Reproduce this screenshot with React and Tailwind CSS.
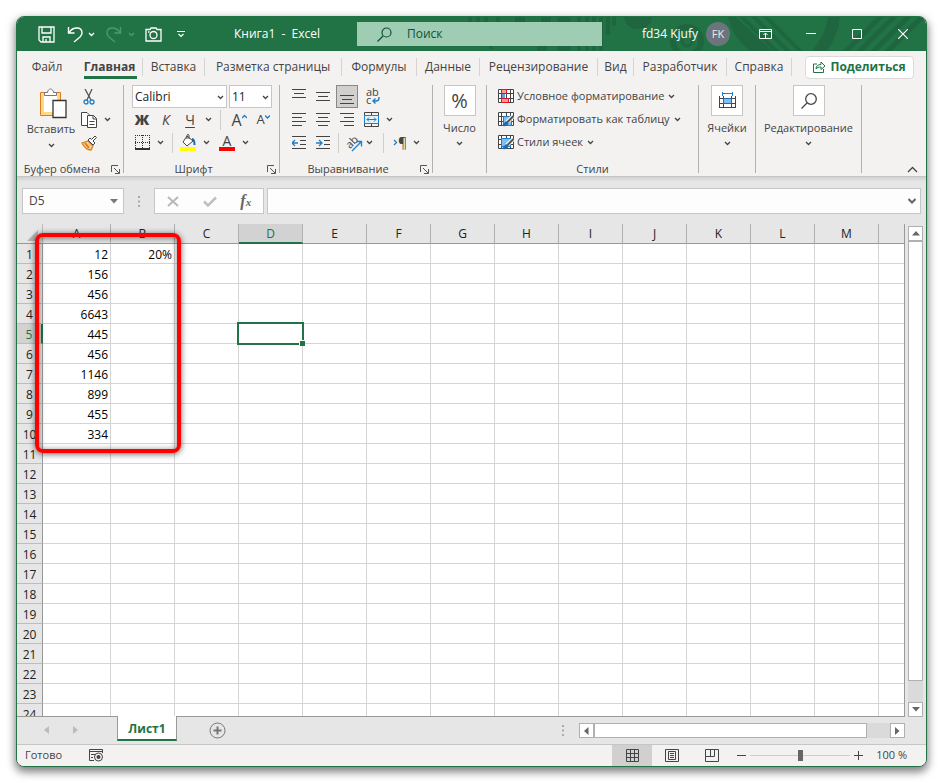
import { useState } from "react";
import clsx from "clsx";

const TABS = [
  { label: "Файл", width: "w-[60px]", noLine: true },
  { label: "Главная", width: "w-[66px]", active: true },
  { label: "Вставка", width: "w-[62px]" },
  { label: "Разметка страницы", width: "w-[137px]" },
  { label: "Формулы", width: "w-[75px]" },
  { label: "Данные", width: "w-[63px]" },
  { label: "Рецензирование", width: "w-[118px]" },
  { label: "Вид", width: "w-[36px]" },
  { label: "Разработчик", width: "w-[93px]" },
  { label: "Справка", width: "w-[65px]" },
];

const COLUMNS = ["A", "B", "C", "D", "E", "F", "G", "H", "I", "J", "K", "L", "M", ""];
const ROWS = Array.from({ length: 24 }, (_, i) => i + 1);

const CELLS = {
  A1: "12",
  A2: "156",
  A3: "456",
  A4: "6643",
  A5: "445",
  A6: "456",
  A7: "1146",
  A8: "899",
  A9: "455",
  A10: "334",
  B1: "20%",
};

export default function App() {
  return (
    <div className="h-screen p-4 bg-white font-['Open_Sans','Noto_Sans',sans-serif] text-xs text-[#444]">
      <div className="h-full flex flex-col overflow-hidden rounded-lg border border-[#217346] bg-[#e6e6e6] shadow-[0_4px_9px_1px_rgba(0,0,0,0.5)]">
        <TitleBar />
        <TabStrip />
        <Ribbon />
        <FormulaBar />
        <Sheet />
        <SheetTabs />
        <StatusBar />
      </div>
    </div>
  );
}

function TitleBar() {
  return (
    <header className="relative h-[34px] shrink-0 flex items-center bg-[#217346] text-white">
      <TitleArt />
      <div className="relative flex items-center pl-4 w-[217px]">
        <button aria-label="Сохранить" className="w-[26px] flex justify-center">
          <svg width="17" height="17" fill="none" stroke="currentColor" strokeWidth="1.3">
            <path d="M1 1h15v15H3l-2-2zM4 1v6h9V1M5 16v-5h7v5M8 16v-3" />
          </svg>
        </button>
        <button aria-label="Отменить" className="w-[28px] ml-[2px] flex justify-center">
          <svg width="16" height="17" fill="none" stroke="currentColor" strokeWidth="1.4">
            <path d="M1.500 1v6h6M2 7C4 3 7 2 10 2c3 0 5 2 5 5 0 2-1 3-2 4l-6 5" />
          </svg>
        </button>
        <button aria-label="История отмены" className="w-3 -ml-[4px] flex justify-center">
          <Chevron />
        </button>
        <button aria-label="Вернуть" disabled className="w-[28px] ml-[3px] flex justify-center text-[#4b9a6e]">
          <svg width="16" height="17" fill="none" stroke="currentColor" strokeWidth="1.4">
            <path d="M14.500 1v6h-6M14 7C12 3 9 2 6 2 3 2 1 4 1 7c0 2 1 3 2 4l6 5" />
          </svg>
        </button>
        <button aria-label="История возврата" disabled className="w-3 -ml-[3px] flex justify-center text-[#4b9a6e]">
          <Chevron />
        </button>
        <button aria-label="Снимок" className="w-[26px] ml-[3px] flex justify-center">
          <svg width="17" height="15" fill="none" stroke="currentColor" strokeWidth="1.3">
            <path d="M1 2.500h4l1-1.500h5l1 1.500h4V14H1z" />
            <circle cx="8.500" cy="8" r="3.500" />
            <path d="M3 5h1.500" />
          </svg>
        </button>
        <button aria-label="Настройка панели" className="w-5 ml-[5px] flex justify-center">
          <svg width="8" height="8" fill="none" stroke="currentColor" strokeWidth="1.2">
            <path d="M0 1.500h8M1.500 4L4 6.500 6.500 4" />
          </svg>
        </button>
      </div>
      <div className="relative w-[123px] whitespace-pre">Книга1  -  Excel</div>
      <label className="relative w-[245px] h-6 flex items-center bg-[#9fcdb3] text-[#0f5132]">
        <svg width="15" height="15" className="ml-5" fill="none" stroke="currentColor" strokeWidth="1.2">
          <circle cx="9.500" cy="5.500" r="4.500" />
          <path d="M6 9L.5 14.500" />
        </svg>
        <input
          aria-label="Поиск"
          placeholder="Поиск"
          className="ml-[15px] w-[180px] bg-transparent outline-none placeholder:text-[#0f5132]"
        />
      </label>
      <div className="relative ml-auto flex items-center">
        <span className="mr-2">fd34 Kjufy</span>
        <span className="w-6 h-6 mr-3 rounded-full bg-[#6c757d] flex items-center justify-center text-[11px] text-[#f0e9e0]">
          FK
        </span>
        <button aria-label="Параметры ленты" className="w-[46px] h-8 flex items-center justify-center">
          <svg width="13" height="10" fill="none" stroke="currentColor">
            <path d="M.5.5h12v9H.5zM.5 2.500h12M6.500 9V4M4.500 6l2-2 2 2" />
          </svg>
        </button>
        <button aria-label="Свернуть" className="w-[46px] h-8 flex items-center justify-center">
          <svg width="10" height="10" stroke="currentColor">
            <path d="M0 4.500h10" />
          </svg>
        </button>
        <button aria-label="Развернуть" className="w-[46px] h-8 flex items-center justify-center">
          <svg width="10" height="10" fill="none" stroke="currentColor">
            <path d="M.5.5h9v9h-9z" />
          </svg>
        </button>
        <button aria-label="Закрыть" className="w-[46px] h-8 flex items-center justify-center">
          <svg width="10" height="10" stroke="currentColor" strokeWidth="1.2">
            <path d="M0 0l10 10M10 0L0 10" />
          </svg>
        </button>
      </div>
    </header>
  );
}

function TitleArt() {
  return (
    <svg width="460" height="34" className="absolute right-0 top-0" fill="none" stroke="#1f6540" aria-hidden="true">
      <path strokeWidth="4" d="M4 0v5M12 0v5M20 0v5M32 0v5M25 28v4M113 0v34M121 0v34M128 0v34M135 0v34M142 0v18M148 0v9" />
      <path strokeWidth="10" d="M54 0v5M80 0v5M76 29v5" />
      <path strokeWidth="13" d="M98 0v34" />
      <path fill="#1f6540" stroke="none" d="M158 0h28a14 12 0 0 1-28 0z" />
      <circle cx="221" cy="24" r="14" strokeWidth="6" />
      <circle cx="221" cy="24" r="5" strokeWidth="3" />
      <path fill="#1f6540" stroke="none" d="M262 0h8l36 34h-22c-10-8-18-18-22-34z" />
      <path strokeWidth="4" d="M274-2l38 38M286-2l38 38M298-2l38 38" />
      <path strokeWidth="12" d="M368-4c0 16-6 28-16 40" />
      <path strokeWidth="5" d="M418-4l-40 40M432-4l-40 40M446-4l-40 40M460-4l-40 40" />
    </svg>
  );
}

function TabStrip() {
  return (
    <nav className="h-8 shrink-0 flex items-center bg-[#f3f2f1]">
      {TABS.map((tab) => (
        <div key={tab.label} className={clsx("h-8 flex items-center shrink-0", tab.width)}>
          <button
            className={clsx(
              "relative flex-1 h-8 flex items-center justify-center whitespace-nowrap",
              tab.active && "font-bold"
            )}
          >
            {tab.label}
            {tab.active && <span className="absolute left-[7px] right-[5px] bottom-1 h-[3px] bg-[#217346]" />}
          </button>
          {!tab.noLine && <span className="w-px h-[18px] bg-[#d6d4d2]" />}
        </div>
      ))}
      <button className="ml-auto mr-3 h-[23px] w-[109px] shrink-0 flex items-center justify-center gap-1 whitespace-nowrap rounded-sm border border-[#dddbd9] bg-white font-bold text-[#217346]">
        <svg width="13" height="12" fill="none" stroke="currentColor">
          <path d="M4 3H.5v8.500h10V8M3 8c0-3 2-4.500 5-4.500V1l4 4-4 3.500V6C6 6 4 6.500 3 8z" />
        </svg>
        Поделиться
      </button>
    </nav>
  );
}

function Ribbon() {
  return (
    <section className="h-[94px] shrink-0 flex border-b border-[#c8c6c4] bg-[#f3f2f1] pt-[2px] text-[11px]">
      <Group width="w-[107px]" label="Буфер обмена" launcher>
        <div className="flex">
          <button className="w-[60px] pl-2 pt-[3px] flex flex-col items-center">
            <svg width="28" height="31" className="shrink-0 ml-1" fill="none">
              <path d="M1.500 4.500h20v23h-20z" fill="#fff" stroke="#e07b1a" />
              <path d="M3.500 6.500h16v19h-16z" stroke="#ffd98a" strokeWidth="3" />
              <path d="M5.500 7.500v-3h3c0-2 1.500-3.500 3-3.500s3 1.500 3 3.500h3v3z" fill="#fff" stroke="#777" />
              <path d="M14 12.500h13v17H14z" fill="#fff" stroke="#333" strokeWidth="1.3" />
            </svg>
            <span className="mt-[2px] leading-4">Вставить</span>
            <span className="mt-[6px]">
              <Chevron />
            </span>
          </button>
          <div className="flex flex-col">
            <Row>
              <IconButton label="Вырезать">
                <svg width="12" height="16" fill="none">
                  <path d="M2 0l6 11M9 0L4 11" stroke="#555" strokeWidth="1.3" />
                  <circle cx="3" cy="13" r="2" stroke="#1e7ec8" strokeWidth="1.3" />
                  <circle cx="9" cy="13" r="2" stroke="#1e7ec8" strokeWidth="1.3" />
                </svg>
              </IconButton>
            </Row>
            <Row>
              <IconButton label="Копировать">
                <svg width="16" height="16" fill="#fff" stroke="#444">
                  <path d="M.5.5H6l2 2v11H.5z" />
                  <path d="M6.500 3.500h6l3 3v9h-9z M12 3.500v3.500h3.500M8.500 9.500h5M8.500 12.500h5" />
                </svg>
              </IconButton>
              <Drop label="Копировать: параметры" />
            </Row>
            <Row>
              <IconButton label="Формат по образцу">
                <svg width="17" height="16" fill="none">
                  <path d="M1 8l6-2 5 5-2 4c-4 0-7-3-9-7z" fill="#fbd08e" stroke="#e07b1a" strokeWidth="1.3" />
                  <path d="M4 8l4 5" stroke="#e07b1a" strokeWidth="2" />
                  <path d="M7 5l5 5 2-2-2-2 3.500-3.500-1.500-1.500L10.500 4.500 9 3z" fill="#fff" stroke="#444" />
                </svg>
              </IconButton>
            </Row>
          </div>
        </div>
      </Group>

      <Group width="w-[156px]" label="Шрифт" launcher>
        <Row>
          <SelectBox label="Шрифт" value="Calibri" width="w-[95px] ml-2" />
          <SelectBox label="Размер шрифта" value="11" width="w-[43px] ml-[2px]" />
        </Row>
        <Row>
          <IconButton label="Полужирный" className="ml-[6px] text-sm font-extrabold">Ж</IconButton>
          <IconButton label="Курсив" className="text-sm italic">К</IconButton>
          <IconButton label="Подчеркнутый" className="text-sm underline underline-offset-2">Ч</IconButton>
          <Drop label="Вид подчеркивания" />
          <Divider className="mx-[6px]" />
          <IconButton label="Увеличить размер" className="text-base">
            A
            <svg width="5" height="12" fill="none" stroke="#1e7ec8" strokeWidth="1.3">
              <path d="M0 4l2.500-2.500L5 4" />
            </svg>
          </IconButton>
          <IconButton label="Уменьшить размер" className="text-[13px]">
            A
            <svg width="5" height="12" fill="none" stroke="#1e7ec8" strokeWidth="1.3">
              <path d="M0 1.500L2.500 4 5 1.500" />
            </svg>
          </IconButton>
        </Row>
        <Row>
          <IconButton label="Границы" className="ml-[6px]">
            <svg width="15" height="15" fill="none" stroke="#333" shapeRendering="crispEdges">
              <path d="M0 .5h15M.5 0v15M14.500 0v15M7.500 0v15M0 7.500h15" strokeDasharray="1 1" />
              <path d="M0 14h15" strokeWidth="2" />
            </svg>
          </IconButton>
          <Drop label="Вид границ" />
          <Divider className="ml-[6px] mr-[3px]" />
          <IconButton label="Цвет заливки">
            <svg width="16" height="17" fill="none">
              <path d="M7 2l6 5-6 5-4-4z" fill="#fff" stroke="#444" />
              <path d="M7 5V1.500C7 0 9 0 9 1.500V5" stroke="#444" />
              <path d="M12 5c2 0 2.500 2 2.500 6" stroke="#1e6cb0" strokeWidth="2" />
              <path d="M0 13h16v4H0z" fill="#ff0" />
            </svg>
          </IconButton>
          <Drop label="Выбор заливки" />
          <IconButton label="Цвет текста" className="ml-[3px]">
            <span className="flex flex-col items-center w-4">
              <span className="h-[13px] text-sm leading-[13px]">A</span>
              <span className="h-1 w-4 bg-[#f00]" />
            </span>
          </IconButton>
          <Drop label="Выбор цвета текста" />
        </Row>
      </Group>

      <Group width="w-[153px]" label="Выравнивание" launcher>
        <Row>
          <IconButton label="По верхнему краю" className="ml-[7px]">
            <Lines lines={[[0, 14, 0], [2, 10, 4], [0, 14, 8]]} />
          </IconButton>
          <IconButton label="По середине">
            <Lines lines={[[0, 14, 3], [2, 10, 7], [0, 14, 11]]} />
          </IconButton>
          <button
            aria-label="По нижнему краю"
            aria-pressed="true"
            className="w-[22px] h-[23px] mx-px flex items-center justify-center border border-[#8a8886] bg-[#d2d0ce]"
          >
            <Lines lines={[[0, 14, 6], [2, 10, 10], [0, 14, 14]]} />
          </button>
          <IconButton label="Перенести текст" className="ml-[2px]">
            <svg width="16" height="22" className="overflow-visible" fill="none">
              <text fontSize="11" fill="#444">
                <tspan x="1" y="10">ab</tspan>
                <tspan x="1" y="18">c</tspan>
              </text>
              <path d="M14 11v1c0 2-1 3-3 3H8M10.500 12.500L8 15l2.500 2.500" stroke="#1e7ec8" strokeWidth="1.4" />
            </svg>
          </IconButton>
        </Row>
        <Row>
          <IconButton label="По левому краю" className="ml-[7px]">
            <Lines lines={[[0, 14, 1], [0, 10, 5], [0, 14, 9], [0, 10, 13]]} />
          </IconButton>
          <IconButton label="По центру">
            <Lines lines={[[0, 14, 1], [2, 10, 5], [0, 14, 9], [2, 10, 13]]} />
          </IconButton>
          <IconButton label="По правому краю">
            <Lines lines={[[0, 14, 1], [4, 10, 5], [0, 14, 9], [4, 10, 13]]} />
          </IconButton>
          <IconButton label="Объединить и поместить в центре">
            <svg width="15" height="15" fill="none" stroke="#444">
              <path d="M.5.5h14v14H.5zM7.500.5v3M7.500 11v3.500" />
              <path d="M.5 3.500h14v8H.5z" fill="#e3f1fb" stroke="#1e7ec8" />
              <path d="M3 7.500h9M5 5.500l-2 2 2 2M10 5.500l2 2-2 2" stroke="#1e7ec8" />
            </svg>
          </IconButton>
          <Drop label="Объединение" />
        </Row>
        <Row>
          <IconButton label="Уменьшить отступ" className="ml-[7px]">
            <Indent d="M0 7h6M3 4L0 7l3 3" />
          </IconButton>
          <IconButton label="Увеличить отступ">
            <Indent d="M0 7h6M3 4l3 3-3 3" />
          </IconButton>
          <Divider className="mx-[3px]" />
          <IconButton label="Ориентация" className="-mr-[3px]">
            <svg width="18" height="18" className="overflow-visible" fill="none">
              <text x="1" y="12" fontSize="11" fill="#444" transform="rotate(-45 7 9)">ab</text>
              <path d="M7 17L16 8M11.500 7.500h5V12.500" stroke="#1e7ec8" strokeWidth="1.3" />
            </svg>
          </IconButton>
          <Drop label="Выбор ориентации" />
          <Divider className="ml-2 mr-1" />
          <IconButton label="Направление текста" className="-mr-[2px] text-sm">
            <svg width="5" height="7" fill="none" stroke="#1e7ec8" strokeWidth="1.3">
              <path d="M1 1l2.500 2.500L1 6" />
            </svg>
            ¶
          </IconButton>
          <Drop label="Выбор направления" />
        </Row>
      </Group>

      <BigGroup width="w-[54px]" label="Число">
        <span className="text-xl leading-5">%</span>
      </BigGroup>

      <Group width="w-[212px]" label="Стили">
        <StyleRow label="Условное форматирование">
          <TableIcon>
            <path d="M3.500.5h5v4h-5zM3.500 9.500h7v4h-7z" fill="#ff9a9a" stroke="#e81123" />
            <path d="M4 5h3v4H4z" fill="#5aa7e0" stroke="none" />
          </TableIcon>
        </StyleRow>
        <StyleRow label="Форматировать как таблицу">
          <TableIcon>
            <path d="M5.500 4.500h8v9h-8z" fill="#83bdec" stroke="#1e7ec8" />
            <Brush />
          </TableIcon>
        </StyleRow>
        <StyleRow label="Стили ячеек">
          <TableIcon>
            <path d="M3.500 3.500h9v8h-9z" fill="#83bdec" stroke="#1e7ec8" />
            <Brush />
          </TableIcon>
        </StyleRow>
      </Group>

      <BigGroup width="w-[57px]" label="Ячейки">
        <svg width="17" height="17" fill="none" stroke="#444" shapeRendering="crispEdges">
          <path d="M.5 3.500v12h16v-12M.5 6.500h16M.5 11.500h16M4.500 4v12M12.500 4v12" />
          <path d="M4.500 6.500h8v5h-8z" fill="#83bdec" stroke="#1e6cb0" />
          <path d="M3.500 1.500h10M3.500 0v4M13.500 0v4" stroke="#1e7ec8" />
        </svg>
      </BigGroup>
      <BigGroup width="w-[106px]" label="Редактирование">
        <svg width="16" height="16" fill="none" stroke="#444" strokeWidth="1.3">
          <circle cx="10" cy="6" r="5.300" />
          <path d="M6 10L.5 15.500" />
        </svg>
      </BigGroup>

      <button aria-label="Свернуть ленту" className="ml-auto mr-2 mb-[3px] self-end">
        <svg width="11" height="7" fill="none" stroke="#444" strokeWidth="1.3">
          <path d="M1 6l4.500-4.500L10 6" />
        </svg>
      </button>
    </section>
  );
}

function Group({ width, label, launcher, children }) {
  return (
    <div className={clsx("shrink-0 h-[88px] flex flex-col border-r border-[#b3b1af]", width)}>
      <div className="h-[75px] shrink-0">{children}</div>
      <div className="flex items-center h-[18px] shrink-0">
        <span className="flex-1 text-center whitespace-nowrap">{label}</span>
        {launcher && (
          <button aria-label={`${label}: параметры`} className="w-4 flex justify-center">
            <svg width="9" height="9" fill="none" stroke="#555">
              <path d="M.5 7V.5H7M3 3l5 5M8.500 4v4.500H4" />
            </svg>
          </button>
        )}
      </div>
    </div>
  );
}

function BigGroup({ width, label, children }) {
  return (
    <div className={clsx("shrink-0 h-[88px] border-r border-[#b3b1af]", width)}>
      <button className="w-full flex flex-col items-center">
        <span className="w-8 h-[31px] flex items-center justify-center border border-[#c8c6c4] bg-white">
          {children}
        </span>
        <span className="mt-1 leading-4 whitespace-nowrap">{label}</span>
        <span className="mt-[5px]">
          <Chevron />
        </span>
      </button>
    </div>
  );
}

function Row({ children }) {
  return <div className="flex items-center h-[23px]">{children}</div>;
}

function IconButton({ label, className, children }) {
  return (
    <button aria-label={label} className={clsx("w-6 h-[23px] shrink-0 flex items-center justify-center", className)}>
      {children}
    </button>
  );
}

function Drop({ label }) {
  return (
    <button aria-label={label} className="w-3 h-[23px] shrink-0 flex items-center justify-center">
      <Chevron />
    </button>
  );
}

function Chevron() {
  return (
    <svg width="7" height="5" fill="none" stroke="currentColor" strokeWidth="1.3">
      <path d="M1 1l2.500 2.500L6 1" />
    </svg>
  );
}

function Divider({ className }) {
  return <span className={clsx("w-px h-5 shrink-0 bg-[#d0cecc]", className)} />;
}

function SelectBox({ label, value, width }) {
  return (
    <span className={clsx("relative h-[23px] border border-[#c8c6c4] bg-white text-xs", width)}>
      <select
        aria-label={label}
        defaultValue={value}
        className="w-full h-full pl-[2px] appearance-none bg-transparent text-[#222] outline-none"
      >
        <option>{value}</option>
      </select>
      <span className="pointer-events-none absolute right-[2px] top-[9px]">
        <Chevron />
      </span>
    </span>
  );
}

// each line is [x, length, y]
function Lines({ lines }) {
  return (
    <svg width="14" height="15" fill="#444" shapeRendering="crispEdges">
      {lines.map(([x, length, y]) => (
        <rect key={y} x={x} y={y} width={length} height="1" />
      ))}
    </svg>
  );
}

function Indent({ d }) {
  return (
    <svg width="15" height="14" fill="none" stroke="#444">
      <path d="M0 .5h14M8 4.500h6M8 8.500h6M0 12.500h14" />
      <path d={d} stroke="#1e7ec8" strokeWidth="1.3" />
    </svg>
  );
}

function StyleRow({ label, children }) {
  return (
    <Row>
      <button className="flex items-center pl-[11px] whitespace-nowrap">
        {children}
        <span className="ml-[3px] mr-1">{label}</span>
        <Chevron />
      </button>
    </Row>
  );
}

function TableIcon({ children }) {
  return (
    <svg width="16" height="15" fill="none" stroke="#444">
      <path d="M.5.5h15v13H.5zM.5 4.500h15M.5 9.500h15M3.500.5v13M8.500.5v13M12.500.5v13" fill="#fff" />
      {children}
    </svg>
  );
}

function Brush() {
  return (
    <>
      <path d="M15.500 4L9 10" stroke="#fff" strokeWidth="4" />
      <path d="M15.500 4L9 10.500" stroke="#555" strokeWidth="2" />
      <path d="M9 9.500c-3 0-3 3-5.500 4 3 1.500 7 .5 7-2.500z" fill="#1e6cb0" stroke="none" />
    </>
  );
}

function FormulaBar() {
  const [address, setAddress] = useState("D5");

  return (
    <div className="shrink-0 flex items-center h-[47px] px-[5px] pt-px bg-linear-to-b from-[#d0d0d0] to-[#e6e6e6] to-10%">
      <div className="flex items-center w-[102px] h-[26px] border border-[#c6c6c6] bg-[#fdfdfd]">
        <input
          aria-label="Имя"
          value={address}
          onChange={(e) => setAddress(e.target.value)}
          className="w-[87px] pl-[6px] bg-transparent outline-none"
        />
        <button aria-label="Список имен">
          <svg width="8" height="5" fill="#777">
            <path d="M0 0h8L4 4.500z" />
          </svg>
        </button>
      </div>
      <svg width="3" height="11" className="ml-[14px]" fill="#aaa">
        <path d="M0 0h2v2H0zM0 4.500h2v2H0zM0 9h2v2H0z" />
      </svg>
      <div className="ml-[13px] w-[110px] h-[26px] flex items-center justify-around border border-[#c6c6c6] bg-[#fdfdfd]">
        <button aria-label="Отмена">
          <svg width="12" height="11" fill="none" stroke="#b8b8b8" strokeWidth="2">
            <path d="M1 1l10 9M11 1L1 10" />
          </svg>
        </button>
        <button aria-label="Ввод">
          <svg width="14" height="11" fill="none" stroke="#bfbfbf" strokeWidth="2.500">
            <path d="M1 5.500L5 9.500 13 1.500" />
          </svg>
        </button>
        <button aria-label="Вставить функцию" className="font-['Liberation_Serif',serif] text-base leading-4 italic font-bold text-[#666]">
          f<span className="text-[11px]">x</span>
        </button>
      </div>
      <div className="ml-[3px] flex-1 h-[26px] flex items-center border border-[#c6c6c6] bg-[#fdfdfd]">
        <input aria-label="Строка формул" className="flex-1 min-w-0 px-2 bg-transparent outline-none" />
        <button aria-label="Развернуть строку формул" className="mr-1">
          <svg width="8" height="6" fill="none" stroke="#666" strokeWidth="2">
            <path d="M.5 1L4 4.500 7.500 1" />
          </svg>
        </button>
      </div>
    </div>
  );
}

function Sheet() {
  return (
    <div className="relative flex-1 min-h-0 flex">
      <div className="flex-1 min-w-0 overflow-hidden border-r border-b border-[#999]">
        <table className="w-full table-fixed border-separate border-spacing-0 text-xs leading-[17px]">
          <colgroup>
            <col className="w-[26px]" />
            <col className="w-[68px]" />
            {COLUMNS.slice(1, 13).map((name) => (
              <col key={name} className="w-16" />
            ))}
            <col />
          </colgroup>
          <thead>
            <tr className="h-5 text-[#222]">
              <th aria-label="Выделить все" className="border-r border-b border-r-[#bbb] border-b-[#999] bg-[#e6e6e6] p-0">
                <svg width="12" height="12" className="ml-auto mr-[3px] mt-1" fill="#b4b4b4">
                  <path d="M11 0v11H0z" />
                </svg>
              </th>
              {COLUMNS.map((name, i) => (
                <th
                  key={i}
                  scope="col"
                  className={clsx(
                    "h-5 p-0 font-normal",
                    i < 13 && "border-r border-r-[#b0b0b0]",
                    name === "D"
                      ? "border-b-2 border-b-[#217346] bg-[#d2d2d2] pt-px text-[#217346]"
                      : "border-b border-b-[#999] bg-[#e6e6e6]"
                  )}
                >
                  {name}
                </th>
              ))}
            </tr>
          </thead>
          <tbody>
            {ROWS.map((row) => (
              <tr key={row} className="h-5">
                <th
                  scope="row"
                  className={clsx(
                    "h-5 p-0 pt-[2px] border-b border-b-[#bdbdbd] font-normal",
                    row === 5
                      ? "border-r-2 border-r-[#217346] bg-[#d2d2d2] text-[#217346]"
                      : "border-r border-r-[#999] bg-[#e6e6e6] text-[#222]"
                  )}
                >
                  {row}
                </th>
                {COLUMNS.map((name, i) => (
                  <td
                    key={i}
                    className={clsx(
                      "relative h-5 p-0 pt-[2px] pr-[2px] border-b border-[#d4d4d4] bg-white text-right text-black",
                      i < 13 && "border-r"
                    )}
                  >
                    {CELLS[name + row]}
                    {name === "D" && row === 5 && <ActiveCell />}
                  </td>
                ))}
              </tr>
            ))}
          </tbody>
        </table>
      </div>

      {/* Highlight frame over the source data */}
      <div className="absolute left-[18px] top-[9px] w-[146px] h-[220px] rounded-lg border-4 border-[#f00] shadow-[0_1px_6px_rgba(0,0,0,0.6),inset_0_1px_6px_rgba(0,0,0,0.5)]" />

      <div className="w-[21px] shrink-0 pt-[2px] px-[3px] flex flex-col">
        <button aria-label="Вверх" className="h-[15px] flex items-center justify-center border border-[#b0b0b0] bg-white">
          <svg width="8" height="5" fill="#666">
            <path d="M4 0l4 4.500H0z" />
          </svg>
        </button>
        <div className="flex-1 pb-[21px] bg-[#dadada]">
          <div className="h-full border border-[#b0b0b0] bg-white" />
        </div>
        <button aria-label="Вниз" className="h-[15px] flex items-center justify-center border border-[#b0b0b0] bg-white">
          <svg width="8" height="5" fill="#666">
            <path d="M0 0h8L4 4.500z" />
          </svg>
        </button>
      </div>
    </div>
  );
}

function ActiveCell() {
  return (
    <span className="absolute -left-[2px] -top-[2px] -right-[2px] -bottom-[2px] z-10 border-2 border-[#217346]">
      <span className="absolute -right-[3px] -bottom-[3px] w-[6px] h-[6px] border-l border-t border-white bg-[#217346]" />
    </span>
  );
}

function SheetTabs() {
  return (
    <div className="shrink-0 h-7 flex items-start border-b border-[#c6c6c6]">
      <div className="w-[100px] h-[26px] flex items-center pl-[27px] gap-[24px]">
        <button aria-label="Предыдущий лист">
          <svg width="5" height="8" fill="#bbb">
            <path d="M5 0v8L0 4z" />
          </svg>
        </button>
        <button aria-label="Следующий лист">
          <svg width="5" height="8" fill="#bbb">
            <path d="M0 0v8l5-4z" />
          </svg>
        </button>
      </div>
      <button className="relative -mt-px w-[60px] h-[25px] pt-[2px] border-x border-x-[#999] border-b-2 border-b-[#217346] bg-white font-bold text-[#217346]">
        Лист1
      </button>
      <button aria-label="Новый лист" className="ml-8 mt-[5px]">
        <svg width="17" height="17" fill="none" stroke="#777">
          <circle cx="8.500" cy="8.500" r="7.500" />
          <path d="M8.500 4.500v8M4.500 8.500h8" strokeWidth="2" />
        </svg>
      </button>
      <div className="ml-auto h-[27px] flex items-center mr-[21px]">
        <svg width="3" height="11" className="mr-[14px]" fill="#aaa">
          <path d="M0 0h2v2H0zM0 4.500h2v2H0zM0 9h2v2H0z" />
        </svg>
        <button aria-label="Влево" className="w-[15px] h-[15px] flex items-center justify-center border border-[#b0b0b0] bg-white">
          <svg width="5" height="8" fill="#666">
            <path d="M4.500 0v8L0 4z" />
          </svg>
        </button>
        <div className="w-[296px] h-[15px] pr-[23px] bg-[#dadada]">
          <div className="h-full border border-[#b0b0b0] bg-white" />
        </div>
        <button aria-label="Вправо" className="w-[15px] h-[15px] flex items-center justify-center border border-[#b0b0b0] bg-white">
          <svg width="5" height="8" fill="#666">
            <path d="M0 0v8l4.500-4z" />
          </svg>
        </button>
      </div>
    </div>
  );
}

function StatusBar() {
  return (
    <footer className="shrink-0 h-[21px] flex items-center bg-[#f3f2f1] text-[11px]">
      <span className="ml-2 w-16">Готово</span>
      <button aria-label="Запись макроса">
        <svg width="15" height="13" fill="none" stroke="#444">
          <path d="M5 11.500H.5V.5h13V4M.5 2.500h13M2 5.500h4M2 8.500h2" />
          <circle cx="9.500" cy="8" r="4" />
          <circle cx="9.500" cy="8" r="2" fill="#444" stroke="none" />
        </svg>
      </button>
      <div className="ml-auto flex items-center h-[21px]">
        <button aria-label="Обычный" className="w-10 h-[21px] flex items-center justify-center bg-[#d2d0ce]">
          <svg width="13" height="13" fill="none" stroke="#444">
            <path d="M.5.5h12v12H.5zM4.500.5v12M8.500.5v12M.5 4.500h12M.5 8.500h12" />
          </svg>
        </button>
        <button aria-label="Разметка страницы" className="w-10 h-[21px] flex items-center justify-center">
          <svg width="14" height="13" fill="none" stroke="#444">
            <path d="M.5.5h13v12H.5zM3.500 2.500h7v8h-7zM5 4.500h4M5 6.500h4M5 8.500h4" />
          </svg>
        </button>
        <button aria-label="Страничный" className="w-10 h-[21px] flex items-center justify-center">
          <svg width="14" height="13" fill="none" stroke="#444">
            <path d="M.5.5h13v12H.5zM5.500.5v7M9.500.5v7M.5 7.500h9" />
          </svg>
        </button>
        <button aria-label="Уменьшить" className="ml-[5px]">
          <svg width="9" height="9" stroke="#444">
            <path d="M0 4.500h9" />
          </svg>
        </button>
        <input
          type="range"
          aria-label="Масштаб"
          min="0"
          max="200"
          defaultValue="100"
          className="w-[100px] h-[11px] mx-1 appearance-none bg-linear-to-b from-transparent from-45% via-[#aaa] via-45% to-transparent to-55% [&::-webkit-slider-thumb]:appearance-none [&::-webkit-slider-thumb]:w-[5px] [&::-webkit-slider-thumb]:h-[11px] [&::-webkit-slider-thumb]:bg-[#666]"
        />
        <button aria-label="Увеличить">
          <svg width="9" height="9" stroke="#444">
            <path d="M0 4.500h9M4.500 0v9" />
          </svg>
        </button>
        <span className="ml-[13px] mr-[19px] whitespace-nowrap">100 %</span>
      </div>
    </footer>
  );
}
